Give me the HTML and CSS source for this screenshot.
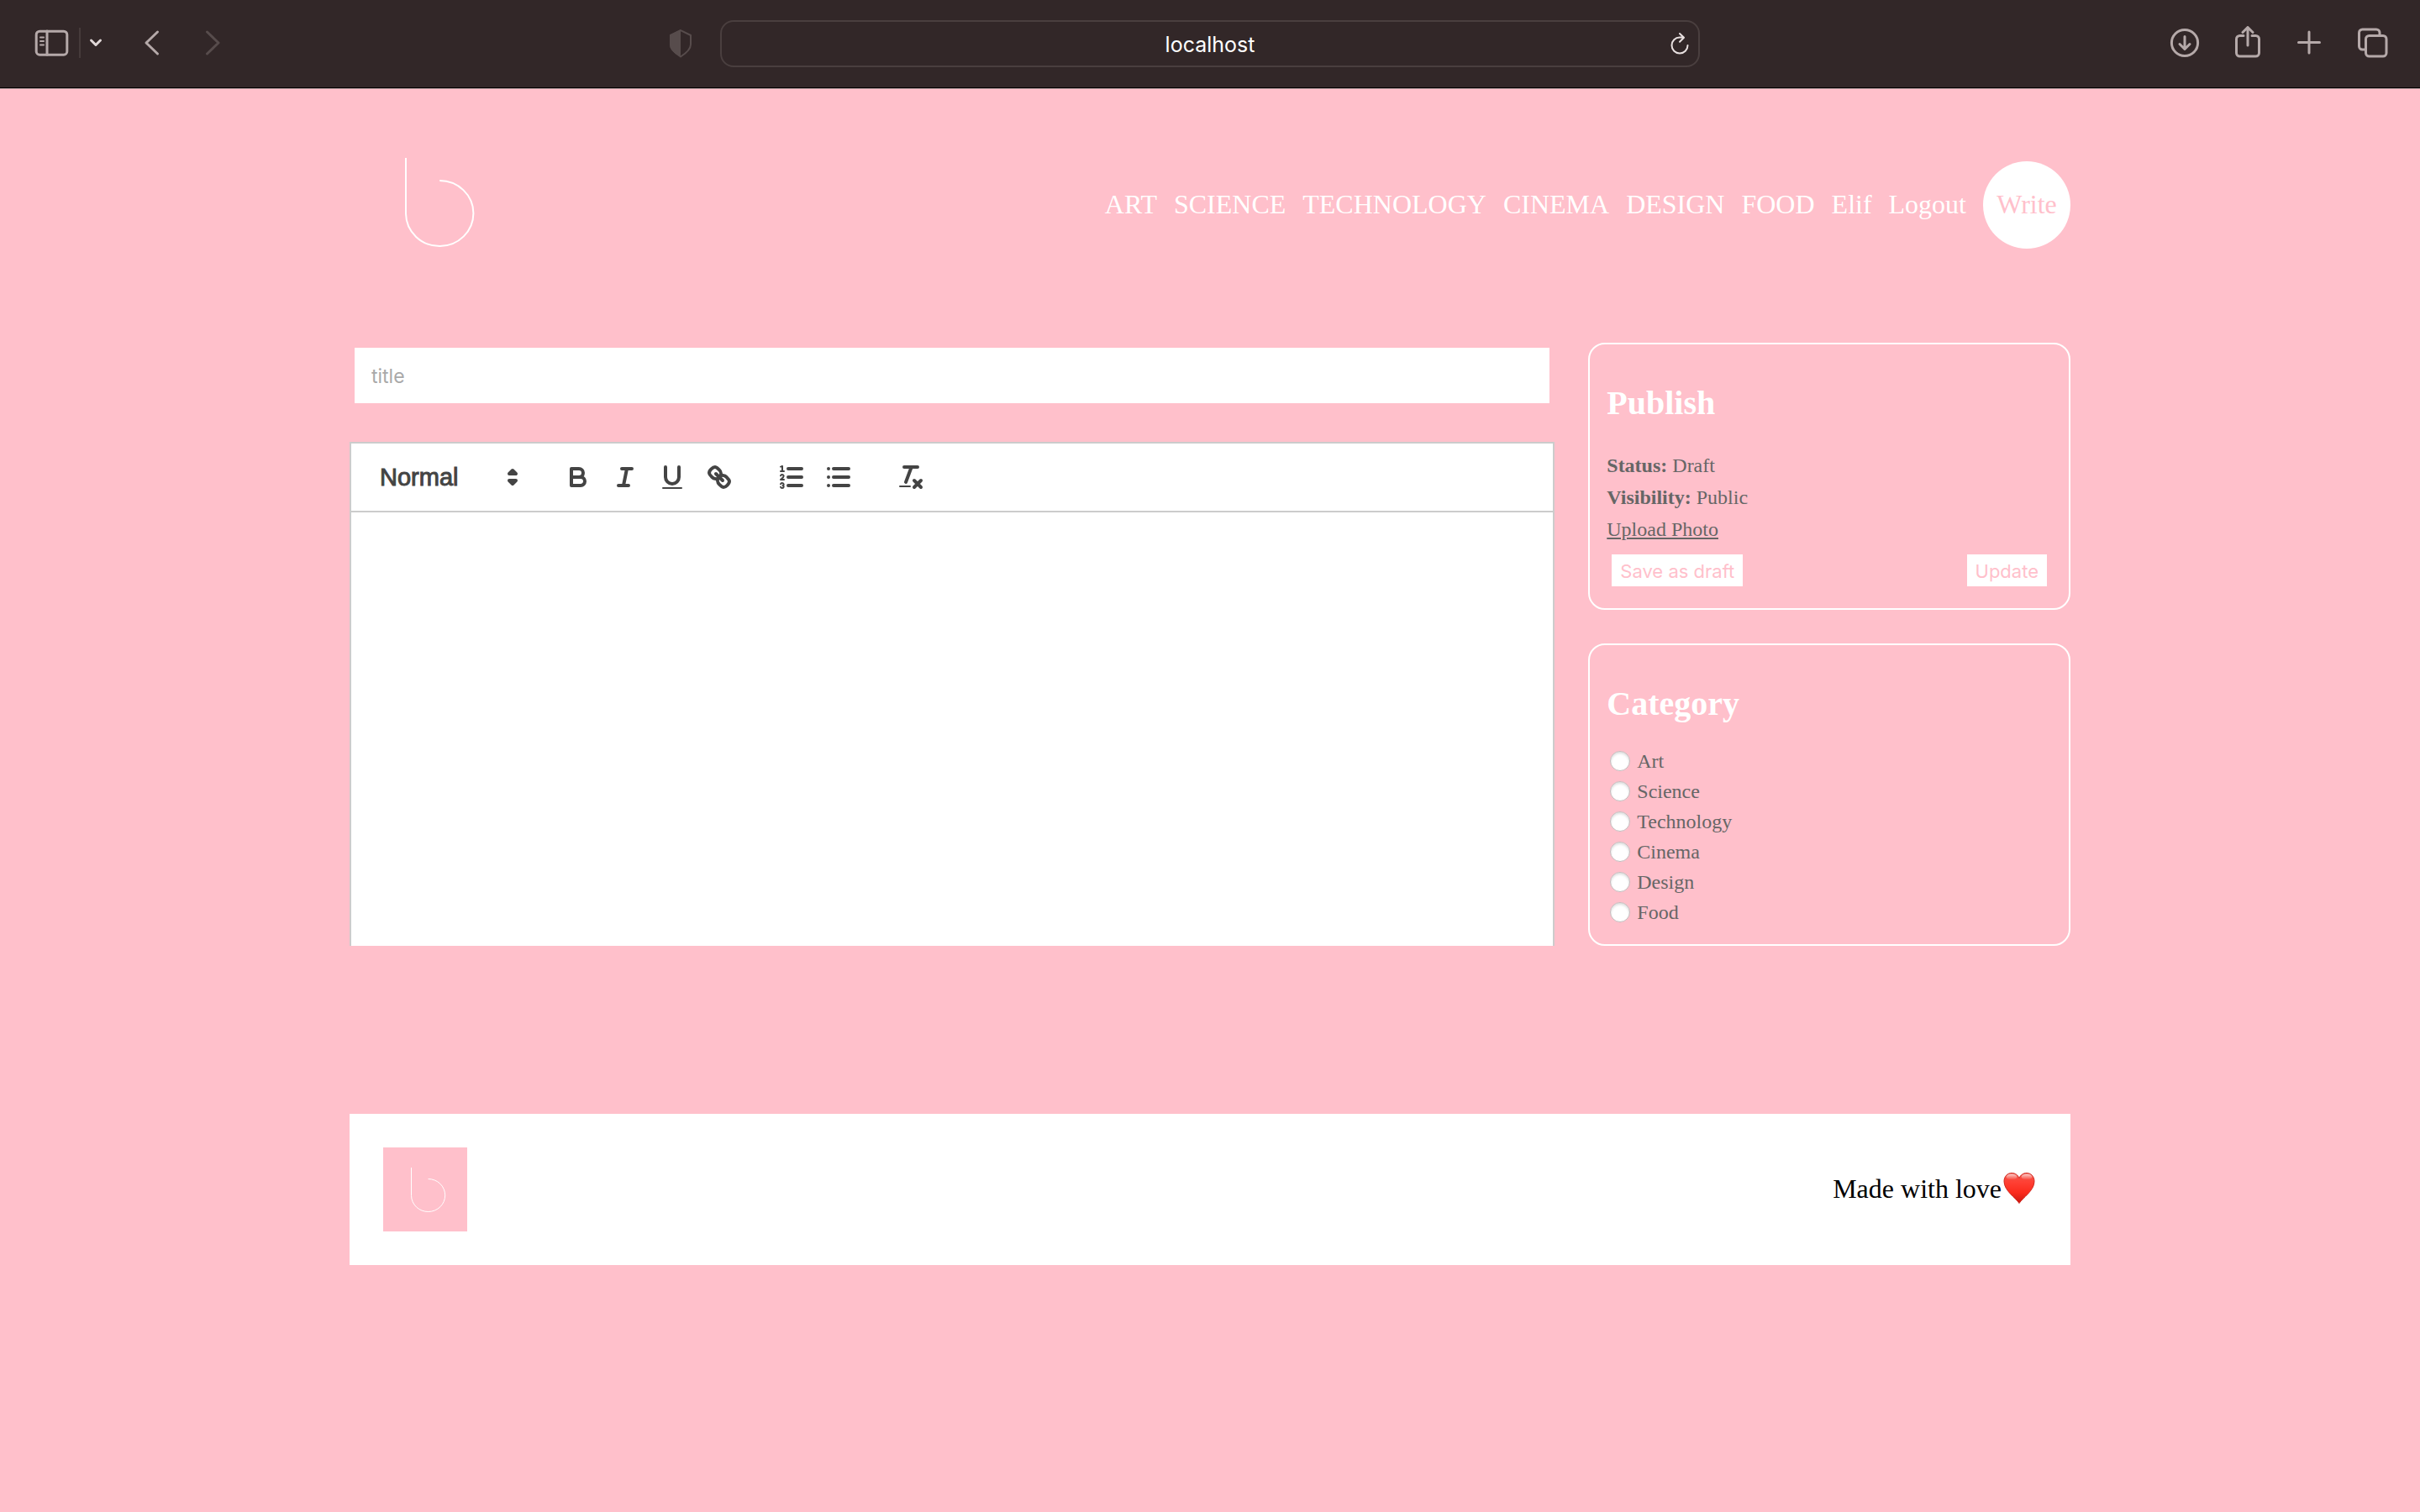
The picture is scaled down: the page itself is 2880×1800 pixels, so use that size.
FILE: index.html
```html
<!DOCTYPE html>
<html lang="en">
<head>
<meta charset="utf-8">
<meta name="viewport" content="width=device-width, initial-scale=1">
<title>localhost</title>
<link rel="stylesheet" href="styles.css">
</head>
<body>
<div class="browser">
  <div class="browser-left">
    <button class="tool" type="button" aria-label="Show sidebar">
      <svg width="44" height="36" viewBox="0 0 44 36"><rect x="3.200" y="4.200" width="36.600" height="28" rx="4"/><path d="M16 4v28"/><path class="thin" d="M8 11.500h4M8 16h4M8 20.500h4"/></svg>
    </button>
    <span class="divider"></span>
    <button class="tool tool-bright" type="button" aria-label="Tab groups">
      <svg width="20" height="20" viewBox="0 0 20 20"><path d="M4.500 7l5.500 5.500L15.500 7"/></svg>
    </button>
    <button class="tool tool-back" type="button" aria-label="Back">
      <svg width="32" height="36" viewBox="0 0 32 36"><path d="M19.500 5L6 18l13.500 13"/></svg>
    </button>
    <button class="tool tool-forward" type="button" aria-label="Forward" disabled>
      <svg width="32" height="36" viewBox="0 0 32 36"><path d="M6.500 5L20 18 6.500 31"/></svg>
    </button>
    <button class="tool tool-shield" type="button" aria-label="Privacy report">
      <svg width="30" height="36" viewBox="0 0 30 36"><path d="M15 3.200L27 9v11c0 5-5 10-12 14.500C8 30 3 25 3 20V9z"/><path class="solid" d="M15 2L2 8.500V20c0 6 5 10.500 13 15z"/></svg>
    </button>
  </div>
  <div class="address">
    <input class="address-input" type="text" value="localhost" aria-label="Address">
    <button class="tool reload" type="button" aria-label="Reload">
      <svg width="24" height="30" viewBox="0 0 24 30"><path d="M21.500 17a9.500 9.500 0 1 1-9.500-9.500h4.500M12 3l5 4.700-5 5"/></svg>
    </button>
  </div>
  <div class="browser-right">
    <button class="tool" type="button" aria-label="Downloads">
      <svg width="36" height="40" viewBox="0 0 36 40"><circle cx="18" cy="20" r="15.600"/><path d="M18 12.500v14.500M12 21.500l6 6 6-6"/></svg>
    </button>
    <button class="tool" type="button" aria-label="Share">
      <svg width="32" height="40" viewBox="0 0 32 40"><path d="M12 11.500H7.500a4 4 0 0 0-4 4V32a4 4 0 0 0 4 4h19a4 4 0 0 0 4-4V15.500a4 4 0 0 0-4-4H22M17 23V2M11 7.500l6-6 6 6"/></svg>
    </button>
    <button class="tool" type="button" aria-label="New tab">
      <svg width="36" height="40" viewBox="0 0 36 40"><path d="M5.500 19.500h25M18 7v25"/></svg>
    </button>
    <button class="tool" type="button" aria-label="Tab overview">
      <svg width="36" height="40" viewBox="0 0 36 40"><rect x="9.500" y="11.500" width="24.500" height="24.500" rx="4"/><path d="M9 28H5.500a4 4 0 0 1-4-4V8a4 4 0 0 1 4-4H22a4 4 0 0 1 4 4v3"/></svg>
    </button>
  </div>
</div>

<div class="page">
  <div class="container">
    <header class="site-header">
      <a class="logo" href="#" aria-label="Home">
        <svg class="logo-mark" viewBox="0 0 100 100"><path d="M33.500 24V57.300A20.100 19.500 0 1 0 53.600 37.500"/></svg>
      </a>
      <nav class="links">
        <a href="#">ART</a>
        <a href="#">SCIENCE</a>
        <a href="#">TECHNOLOGY</a>
        <a href="#">CINEMA</a>
        <a href="#">DESIGN</a>
        <a href="#">FOOD</a>
        <a href="#">Elif</a>
        <a href="#">Logout</a>
        <a class="write" href="#">Write</a>
      </nav>
    </header>

    <main class="compose">
      <div class="content">
        <input class="title" type="text" placeholder="title" aria-label="Title">
        <div class="editor">
          <div class="toolbar">
            <div class="picker">
              <select class="picker-select" aria-label="Text style">
                <option>Normal</option>
                <option>Heading 1</option>
                <option>Heading 2</option>
              </select>
              <svg class="icon picker-arrows" viewBox="0 0 18 18"><polygon points="7 11 9 13 11 11 7 11"/><polygon points="7 7 9 5 11 7 7 7"/></svg>
            </div>
            <div class="formats">
              <button class="format" type="button" aria-label="Bold"><svg class="icon" viewBox="0 0 18 18"><path d="M5,4H9.5A2.5,2.5,0,0,1,12,6.500v0A2.5,2.5,0,0,1,9.5,9H5Z"/><path d="M5,9h5.500A2.5,2.5,0,0,1,13,11.500v0A2.5,2.5,0,0,1,10.500,14H5Z"/></svg></button>
              <button class="format" type="button" aria-label="Italic"><svg class="icon" viewBox="0 0 18 18"><path d="M7 4h6M5 14h6M8 14L10 4"/></svg></button>
              <button class="format" type="button" aria-label="Underline"><svg class="icon" viewBox="0 0 18 18"><path d="M5,3V9a4.012,4.012,0,0,0,4,4H9a4.012,4.012,0,0,0,4-4V3"/><rect class="fill" x="3" y="15" width="12" height="1" rx="0.500"/></svg></button>
              <button class="format" type="button" aria-label="Link"><svg class="icon" viewBox="0 0 18 18"><path d="M7 7l4 4"/><path d="M8.900,4.577a3.476,3.476,0,0,1,.36,4.679A3.476,3.476,0,0,1,4.577,8.900C3.185,7.500,2.035,6.400,4.217,4.217S7.500,3.185,8.900,4.577Z"/><path d="M13.423,9.100a3.476,3.476,0,0,0-4.679-.36,3.476,3.476,0,0,0,.36,4.679c1.392,1.392,2.500,2.542,4.679.36S14.815,10.500,13.423,9.100Z"/></svg></button>
            </div>
            <div class="formats">
              <button class="format" type="button" aria-label="Numbered list"><svg class="icon" viewBox="0 0 18 18"><path d="M7 4h8M7 9h8M7 14h8"/><path class="thin" d="M2.500 5.500h2"/><path class="fill" d="M3.500,6A0.500,0.500,0,0,1,3,5.500V3.085l-0.276.138A0.500,0.500,0,0,1,2.053,3c-0.124-.247-0.023-0.324.224-0.447l1-.5A0.500,0.500,0,0,1,4,2.500v3A0.500,0.500,0,0,1,3.500,6Z"/><path class="thin" d="M4.500,10.500h-2c0-.234,1.850-1.076,1.850-2.234A0.959,0.959,0,0,0,2.500,8.156"/><path class="thin" d="M2.500,14.846a0.959,0.959,0,0,0,1.850-.109A0.700,0.700,0,0,0,3.750,14a0.688,0.688,0,0,0,.6-0.736,0.959,0.959,0,0,0-1.850-.109"/></svg></button>
              <button class="format" type="button" aria-label="Bulleted list"><svg class="icon" viewBox="0 0 18 18"><path d="M6 4h9M6 9h9M6 14h9M3 4h0M3 9h0M3 14h0"/></svg></button>
            </div>
            <div class="formats">
              <button class="format" type="button" aria-label="Clear formatting"><svg class="icon" viewBox="0 0 18 18"><path d="M5 3h8M6 12L9.350 3M11 11l4 4M15 11l-4 4"/><rect class="fill" x="2" y="14" width="7" height="1" rx="0.500"/></svg></button>
            </div>
          </div>
          <textarea class="editor-body" aria-label="Post text"></textarea>
        </div>
      </div>

      <aside class="menu">
        <section class="card publish">
          <h1>Publish</h1>
          <div class="publish-rows">
            <p><b>Status:</b> Draft</p>
            <p><b>Visibility:</b> Public</p>
            <a class="upload" href="#">Upload Photo</a>
            <div class="actions">
              <button class="action" type="button">Save as draft</button>
              <button class="action" type="button">Update</button>
            </div>
          </div>
        </section>
        <section class="card">
          <h1>Category</h1>
          <label class="option"><input class="radio" type="radio" name="cat" value="art">Art</label>
          <label class="option"><input class="radio" type="radio" name="cat" value="science">Science</label>
          <label class="option"><input class="radio" type="radio" name="cat" value="technology">Technology</label>
          <label class="option"><input class="radio" type="radio" name="cat" value="cinema">Cinema</label>
          <label class="option"><input class="radio" type="radio" name="cat" value="design">Design</label>
          <label class="option"><input class="radio" type="radio" name="cat" value="food">Food</label>
        </section>
      </aside>
    </main>

    <footer class="site-footer">
      <div class="footer-logo">
        <svg class="logo-mark" viewBox="0 0 100 100"><path d="M33.500 24V57.300A20.100 19.500 0 1 0 53.600 37.500"/></svg>
      </div>
      <p class="made">Made with love<svg class="heart" viewBox="0 0 42 40" role="img" aria-label="heart">
        <defs>
          <linearGradient id="heartFill" x1="0" y1="0" x2="0" y2="1"><stop offset="0" stop-color="#f0574c"/><stop offset="0.300" stop-color="#ff4034"/><stop offset="0.650" stop-color="#fb2a1c"/><stop offset="1" stop-color="#c81810"/></linearGradient>
          <linearGradient id="heartShine" x1="0" y1="0" x2="0" y2="1"><stop offset="0" stop-color="#fff" stop-opacity="0.700"/><stop offset="1" stop-color="#fff" stop-opacity="0"/></linearGradient>
        </defs>
        <path fill="url(#heartFill)" stroke="#d0281f" d="M21 37.500C17 31 3 22.500 3 11.500 3 5 7.500 1.500 12 1.500c4.500 0 7.500 2.500 9 6 1.500-3.500 4.500-6 9-6 4.500 0 9 3.500 9 10C39 22.500 25 31 21 37.500z"/>
        <ellipse cx="12" cy="6" rx="6.500" ry="3.500" fill="url(#heartShine)"/>
        <ellipse cx="30" cy="6" rx="6.500" ry="3.500" fill="url(#heartShine)"/>
      </svg></p>
    </footer>
  </div>
</div>
</body>
</html>
```
FILE: styles.css
```css
* {
  box-sizing: border-box;
}

body {
  margin: 0;
  min-height: 100vh;
  background: #ffc0cb;
  font-family: "Liberation Serif", "Times New Roman", serif;
}

h1,
p {
  margin: 0;
}

a {
  color: inherit;
  text-decoration: none;
}

button,
input,
select,
textarea {
  border: 0;
  padding: 0;
  margin: 0;
  background: none;
  border-radius: 0;
}

svg {
  display: block;
}

/* Browser bar */

.browser {
  display: grid;
  grid-template-columns: 1fr minmax(300px, 1166px) 1fr;
  align-items: center;
  height: 105px;
  background: #322728;
  border-bottom: 1px solid #000;
}

.browser-left,
.browser-right {
  display: flex;
  align-items: center;
  padding-bottom: 2px;
}

.browser-left {
  padding-left: 40px;
  padding-right: 32px;
}

.browser-right {
  justify-content: flex-end;
  gap: 40px;
  padding-right: 38px;
}

.tool {
  color: #b5a9a9;
}

.tool svg {
  fill: none;
  stroke: currentColor;
  stroke-width: 3;
  stroke-linecap: round;
  stroke-linejoin: round;
}

.tool .thin {
  stroke-width: 2;
}

.tool .solid {
  fill: currentColor;
  stroke: none;
}

.divider {
  width: 2px;
  height: 36px;
  margin: 0 8px 0 10px;
  background: #463b3b;
}

.tool-bright {
  color: #e0d7d7;
}

.tool-back {
  margin-left: 44px;
}

.tool-forward {
  margin-left: 40px;
  color: #574c4c;
}

.tool-shield {
  margin-left: auto;
  color: #574c4c;
}

.tool-shield svg {
  stroke-width: 2;
}

.address {
  display: flex;
  align-items: center;
  height: 56px;
  padding: 0 10px 0 46px;
  border: 2px solid #4a3f3f;
  border-radius: 16px;
}

.address-input {
  flex: 1;
  min-width: 0;
  padding-top: 2px;
  color: #fff;
  font: 25px/30px Inter, sans-serif;
  text-align: center;
}

.reload {
  width: 24px;
  margin-left: 12px;
  color: #e8e0e0;
}

.reload svg {
  stroke-width: 2;
}

/* Page */

.page {
  border-top: 1px solid #b39a9d;
  padding: 34px 40px 40px;
}

.container {
  max-width: 2048px;
  margin: 0 auto;
}

.site-header {
  display: flex;
  justify-content: space-between;
  align-items: center;
  margin-bottom: 60px;
}

.logo {
  width: 200px;
  padding-bottom: 8px;
}

.logo-mark {
  width: 100%;
  fill: none;
  stroke: #fff;
  stroke-width: 1;
}

.links {
  display: flex;
  align-items: center;
  gap: 20px;
  color: #fff;
  font-size: 32px;
  line-height: 36px;
}

.links a {
  padding-bottom: 2px;
}

.links .write {
  display: flex;
  align-items: center;
  justify-content: center;
  width: 104px;
  height: 104px;
  border-radius: 50%;
  background: #fff;
  color: #ffc0cb;
}

.compose {
  display: flex;
  gap: 40px;
}

.content {
  flex: 5;
  display: flex;
  flex-direction: column;
  gap: 46px;
  padding-top: 6px;
}

.title {
  height: 66px;
  margin: 0 6px;
  padding: 2px 20px 0;
  background: #fff;
  font: 23px/28px Inter, sans-serif;
}

.title::placeholder {
  color: #a9a9a9;
}

.editor {
  flex: 1;
  display: flex;
  flex-direction: column;
  border: 2px solid #ccc;
  border-bottom: 0;
  background: #fff;
}

.toolbar {
  display: flex;
  gap: 30px;
  padding: 16px;
  border-bottom: 2px solid #ccc;
}

.picker {
  position: relative;
  width: 196px;
}

.picker-select {
  appearance: none;
  width: 100%;
  height: 48px;
  padding-left: 18px;
  color: #444;
  font: 500 29px/48px "Liberation Sans", Arial, sans-serif;
  -webkit-text-stroke: 1px #444;
}

.icon {
  width: 36px;
  height: 36px;
  fill: none;
  stroke: #444;
  stroke-width: 2;
  stroke-linecap: round;
  stroke-linejoin: round;
}

.icon .thin {
  stroke-width: 1;
}

.icon .fill {
  fill: #444;
  stroke: none;
}

.picker-arrows {
  position: absolute;
  top: 6px;
  right: 2px;
  pointer-events: none;
}

.formats {
  display: flex;
}

.format {
  width: 56px;
  height: 48px;
  padding: 6px 10px;
}

.editor-body {
  flex: 1;
  display: block;
  width: 100%;
  padding: 24px 30px;
  outline: 0;
  resize: none;
  font: 26px/36px "Liberation Sans", Arial, sans-serif;
}

/* Side cards */

.menu {
  flex: 2;
  display: flex;
  flex-direction: column;
  gap: 40px;
}

.card {
  padding: 20px;
  border: 2px solid #fff;
  border-radius: 20px;
  color: #666;
  font-size: 24px;
  line-height: 28px;
}

.card h1 {
  margin: 27px 0;
  color: #fff;
  font-size: 40px;
  line-height: 46px;
}

.publish-rows {
  display: flex;
  flex-direction: column;
  gap: 10px;
  padding-top: 10px;
}

.upload {
  align-self: flex-start;
  text-decoration: underline;
}

.actions {
  display: flex;
  justify-content: space-between;
  padding: 6px;
}

.action {
  height: 38px;
  padding: 2px 10px 0;
  background: #fff;
  color: #ffc0cb;
  font: 22px/28px Inter, sans-serif;
}

.option {
  display: flex;
  align-items: center;
  gap: 8px;
  height: 36px;
}

.radio {
  appearance: none;
  width: 24px;
  height: 24px;
  margin-left: 4px;
  border: 1px solid #c4bcbd;
  border-radius: 50%;
  background: #fff;
  box-shadow: inset 0 2px 3px #ddd;
}

/* Footer */

.site-footer {
  display: flex;
  align-items: center;
  justify-content: space-between;
  margin-top: 200px;
  padding: 40px;
  background: #fff;
}

.footer-logo {
  width: 100px;
  background: #ffc0cb;
}

.made {
  display: flex;
  align-items: center;
  padding-bottom: 2px;
  color: #000;
  font-size: 32px;
  line-height: 36px;
}

.heart {
  width: 42px;
  height: 40px;
}
```
